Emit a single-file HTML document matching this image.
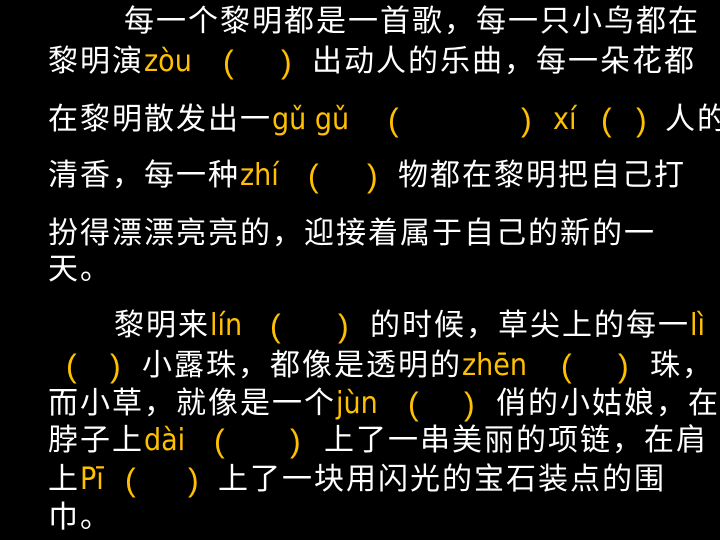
<!DOCTYPE html>
<html><head><meta charset="utf-8"><style>
body{margin:0;width:720px;height:540px;background:#000;overflow:hidden;position:relative}
div{position:absolute;height:40px;line-height:40px;font-size:30px;color:#fff;white-space:nowrap;font-family:"Liberation Sans","Noto Sans CJK SC",sans-serif}
span{position:absolute;top:0;white-space:nowrap}
.y{color:#ffc000;font-family:"DejaVu Sans","Liberation Sans",sans-serif;font-size:30px;transform:scaleX(0.9);transform-origin:left}
.p{color:#ffc000;font-family:"Liberation Sans",sans-serif;font-size:32px}
</style></head><body>
<div style="top:2px;left:0;width:720px"><span style="left:124px;letter-spacing:2px">每一个黎明都是一首歌，每一只小鸟都在</span></div>
<div style="top:42px;left:0;width:720px"><span style="left:48px;letter-spacing:2px">黎明演</span><span class="y" style="left:144px">zòu</span><span class="p" style="left:223px">(</span><span class="p" style="left:281px">)</span><span style="left:312px;letter-spacing:2px">出动人的乐曲，每一朵花都</span></div>
<div style="top:100px;left:0;width:720px"><span style="left:48px;letter-spacing:2px">在黎明散发出一</span><span class="y" style="left:272px">gǔ gǔ</span><span class="p" style="left:388px">(</span><span class="p" style="left:521px">)</span><span class="y" style="left:553px">xí</span><span class="p" style="left:601px">(</span><span class="p" style="left:636px">)</span><span style="left:665px;letter-spacing:2px">人的</span></div>
<div style="top:156px;left:0;width:720px"><span style="left:48px;letter-spacing:2px">清香，每一种</span><span class="y" style="left:240px">zhí</span><span class="p" style="left:308px">(</span><span class="p" style="left:367px">)</span><span style="left:398px;letter-spacing:2px">物都在黎明把自己打</span></div>
<div style="top:214px;left:0;width:720px"><span style="left:48px;letter-spacing:2px">扮得漂漂亮亮的，迎接着属于自己的新的一</span></div>
<div style="top:250px;left:0;width:720px"><span style="left:48px;letter-spacing:2px">天。</span></div>
<div style="top:306px;left:0;width:720px"><span style="left:114px;letter-spacing:2px">黎明来</span><span class="y" style="left:210px">lín</span><span class="p" style="left:270px">(</span><span class="p" style="left:338px">)</span><span style="left:370px;letter-spacing:2px">的时候，草尖上的每一</span><span class="y" style="left:690px">lì</span></div>
<div style="top:346px;left:0;width:720px"><span class="p" style="left:66px">(</span><span class="p" style="left:110px">)</span><span style="left:142px;letter-spacing:2px">小露珠，都像是透明的</span><span class="y" style="left:462px">zhēn</span><span class="p" style="left:561px">(</span><span class="p" style="left:618px">)</span><span style="left:650px;letter-spacing:2px">珠，</span></div>
<div style="top:384px;left:0;width:720px"><span style="left:48px;letter-spacing:2px">而小草，就像是一个</span><span class="y" style="left:336px">jùn</span><span class="p" style="left:408px">(</span><span class="p" style="left:464px">)</span><span style="left:496px;letter-spacing:2px">俏的小姑娘，在</span></div>
<div style="top:421px;left:0;width:720px"><span style="left:48px;letter-spacing:2px">脖子上</span><span class="y" style="left:144px">dài</span><span class="p" style="left:214px">(</span><span class="p" style="left:290px">)</span><span style="left:324px;letter-spacing:2px">上了一串美丽的项链，在肩</span></div>
<div style="top:460px;left:0;width:720px"><span style="left:48px;letter-spacing:2px">上</span><span class="y" style="left:80px">Pī</span><span class="p" style="left:125px">(</span><span class="p" style="left:188px">)</span><span style="left:218px;letter-spacing:2px">上了一块用闪光的宝石装点的围</span></div>
<div style="top:498px;left:0;width:720px"><span style="left:48px;letter-spacing:2px">巾。</span></div>
</body></html>
